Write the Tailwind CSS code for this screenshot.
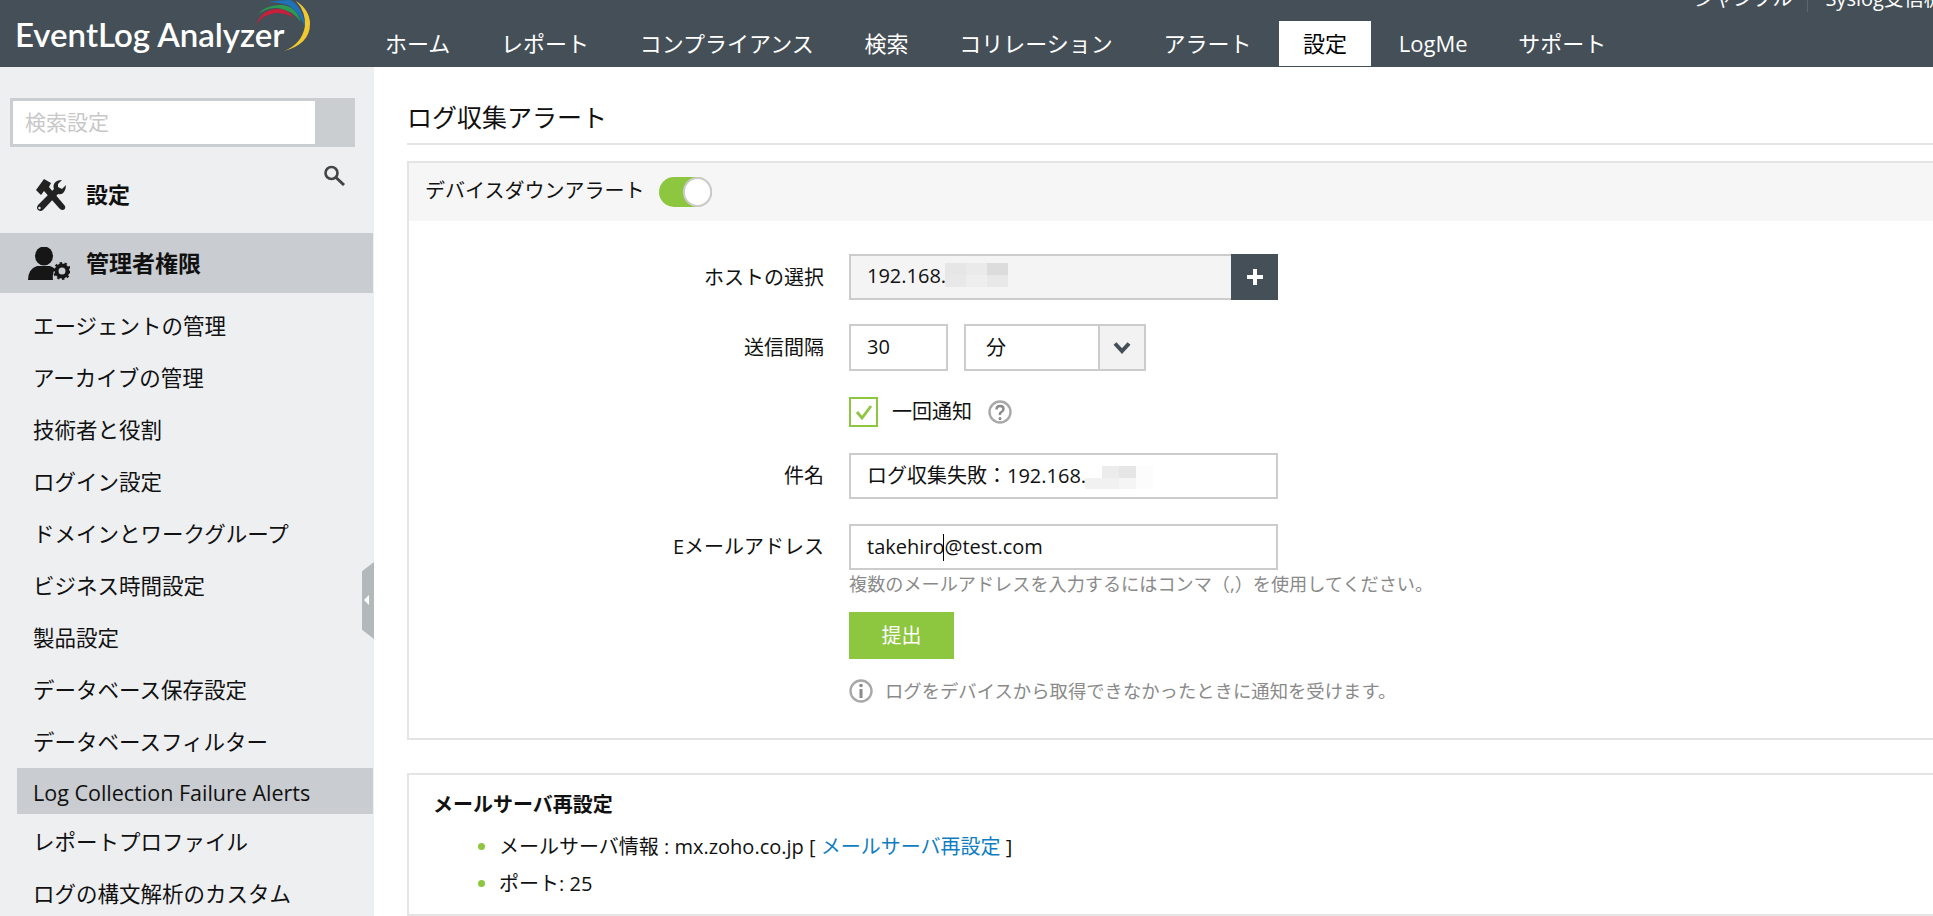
<!DOCTYPE html>
<html lang="ja">
<head>
    <meta charset="UTF-8">
    <title>EventLog Analyzer</title>
    <script src="https://cdn.jsdelivr.net/npm/@tailwindcss/browser@4"></script>
</head>
<body class="h-[916px] overflow-hidden bg-white text-[#111] font-['Open_Sans','Noto_Sans_CJK_JP',sans-serif]">
    <!-- header -->
    <header class="relative h-[67px] bg-[#444f57] overflow-hidden">
        <div class="absolute left-[15px] top-[16px] font-['Lato',sans-serif] font-semibold text-[33px] leading-[36px] text-white whitespace-nowrap">EventLog Analyzer</div>
        <svg class="absolute left-0 top-0" width="320" height="60" viewBox="0 0 320 60">
            <path fill="#c8203a" d="M256 25Q262 9 278 9Q288 9 294 18Q286 13 276 13Q263 14 256 25Z"/>
            <path fill="#2c9a52" d="M256 16Q266 4 282 5Q296 6 301 22Q292 10 278 8Q266 7 256 16Z"/>
            <path fill="#1f71b8" d="M268 2Q280 0 290 0Q303 6 306 30Q300 12 288 5Q278 2 268 2Z"/>
            <path fill="#f2c92d" d="M296 1Q310 10 310 24Q310 44 284 51Q302 44 305 26Q306 12 296 1Z"/>
        </svg>
        <nav class="absolute left-[362px] top-[21px] flex gap-[4.700px] text-[22px] leading-[44px] h-[45px] text-white">
            <a class="px-[23px]">ホーム</a>
            <a class="px-[23px]">レポート</a>
            <a class="px-[23px]">コンプライアンス</a>
            <a class="px-[23px]">検索</a>
            <a class="px-[23px]">コリレーション</a>
            <a class="px-[23px]">アラート</a>
            <a class="px-[24px] bg-white text-black">設定</a>
            <a class="px-[23px]">LogMe</a>
            <a class="px-[23px]">サポート</a>
        </nav>
        <div class="absolute left-[1694px] top-[-14px] flex items-center text-[20px] leading-[24px] text-white whitespace-nowrap">
            <span>ジャンプル</span>
            <span class="ml-[15px] mr-[17px] h-[26px] w-px bg-[#5c666e]"></span>
            <span>Syslog受信機</span>
        </div>
    </header>

    <div class="flex h-[849px]">
        <!-- sidebar -->
        <aside class="relative w-[374px] shrink-0 bg-[#eeeff1] overflow-hidden pt-[31px]">
            <div class="ml-[10px] w-[345px] h-[49px] bg-[#cbced1] pl-[3px] py-[3px]">
                <div class="w-[302px] h-[43px] bg-white pl-[12px] text-[21px] leading-[43px] text-[#c8c8c8]">検索設定</div>
            </div>
            <svg class="absolute left-[323px] top-[98px]" width="22" height="21" viewBox="0 0 22 21" fill="none" stroke="#444" stroke-width="2.6">
                <circle cx="8.5" cy="8" r="6"/>
                <path d="M13 12.5 21 20" stroke-width="3"/>
            </svg>
            <div class="flex items-center h-[86px] pl-[36px] pt-[9px]">
                <svg width="30" height="32" viewBox="0 0 30 32" fill="#222">
                    <path d="M8 0 15 4 13 8 29 27Q30 30 27 31 25 31.500 23 29L8 12 5 16 0 11Z"/>
                    <path d="M26 1Q20 1 18 5 17 8 18 10L2 26Q0 29 2 31 5 33 7 31L22 15Q26 16 28 13 30 10 30 6L26 10 22 8 22 5Z"/>
                    <circle cx="3.500" cy="29" r="1.200" fill="#eeeff1"/>
                </svg>
                <span class="ml-[20px] text-[22px] font-bold">設定</span>
            </div>
            <div class="flex items-center h-[60px] w-[373px] pl-[28px] bg-[#c9ccd0]">
                <svg width="42" height="33" viewBox="0 0 42 33" fill="#161616">
                    <ellipse cx="16" cy="9" rx="9" ry="9.500"/>
                    <path d="M0 33q0-11 9-14h13q3 1 5 3-3 5-2 11z"/>
                    <circle cx="34" cy="24" r="5.500" fill="none" stroke="#161616" stroke-width="4"/>
                    <circle cx="34" cy="24" r="8" fill="none" stroke="#161616" stroke-width="2" stroke-dasharray="2.500 2.500"/>
                </svg>
                <span class="ml-[16px] text-[23px] font-bold">管理者権限</span>
            </div>
            <ul class="mt-[8px] text-[21.500px] leading-[50px]">
                <li class="pl-[33px] h-[52px]">エージェントの管理</li>
                <li class="pl-[33px] h-[52px]">アーカイブの管理</li>
                <li class="pl-[33px] h-[52px]">技術者と役割</li>
                <li class="pl-[33px] h-[52px]">ログイン設定</li>
                <li class="pl-[33px] h-[52px]">ドメインとワークグループ</li>
                <li class="pl-[33px] h-[52px]">ビジネス時間設定</li>
                <li class="pl-[33px] h-[52px]">製品設定</li>
                <li class="pl-[33px] h-[52px]">データベース保存設定</li>
                <li class="pl-[33px] h-[52px]">データベースフィルター</li>
                <li class="ml-[17px] mt-[-1px] pl-[16px] w-[356px] h-[46px] leading-[50px] bg-[#c9ccd0]">Log Collection Failure Alerts</li>
                <li class="pl-[33px] h-[52px] mt-[3px]">レポートプロファイル</li>
                <li class="pl-[33px] h-[52px]">ログの構文解析のカスタム</li>
            </ul>
            <!-- collapse handle -->
            <div class="absolute right-0 top-[495px] w-[12px] h-[77px] bg-[#b3b9bb] [clip-path:polygon(100%_0,100%_100%,0_88%,0_12%)]">
                <div class="absolute left-[2px] top-[33px] w-0 h-0 border-y-[5px] border-y-transparent border-r-[5px] border-r-white"></div>
            </div>
        </aside>

        <!-- main -->
        <main class="flex-1 min-w-0 overflow-hidden pl-[33px]">
            <h1 class="h-[78px] pt-[33px] w-[1530px] border-b-2 border-[#e3e5e6] text-[25px] leading-[34px] font-normal">ログ収集アラート</h1>
            <section class="mt-[16px] w-[1540px] h-[579px] border-2 border-[#e4e4e4]">
                <div class="flex items-center h-[58px] bg-[#f6f6f6] pl-[16px]">
                    <span class="text-[20px] leading-[24px] mb-[2px]">デバイスダウンアラート</span>
                    <span class="ml-[15px] relative w-[53px] h-[30px] rounded-full bg-[#8dc63f]">
                        <span class="absolute right-0 top-0 w-[29px] h-[30px] rounded-full bg-white border-2 border-[#ccc]"></span>
                    </span>
                </div>
                <div class="grid grid-cols-[415px_1fr] gap-x-[25px] pt-[33px] text-[20px]">
                    <label class="text-right leading-[48px] h-[46px]">ホストの選択</label>
                    <div class="flex h-[46px] w-[429px]">
                        <div class="relative flex-1 bg-[#f4f4f4] border-2 border-[#ccc] border-r-0 pl-[16px] leading-[40px]">192.168.
                            <span class="absolute left-[94px] top-[7px] grid grid-cols-3 w-[63px] h-[24px]">
                                <i class="bg-[#e6e6e6]"></i><i class="bg-[#eaeaea]"></i><i class="bg-[#dcdcdc]"></i>
                                <i class="bg-[#e8e8e8]"></i><i class="bg-[#eeeeee]"></i><i class="bg-[#e8e8e8]"></i>
                            </span>
                        </div>
                        <div class="w-[47px] bg-[#444f57] flex items-center justify-center">
                            <svg width="18" height="18" viewBox="0 0 18 18" fill="#fff"><path d="M7 1h4v6h6v4h-6v6H7v-6H1V7h6z"/></svg>
                        </div>
                    </div>
                    <label class="mt-[24px] text-right leading-[47px] h-[47px]">送信間隔</label>
                    <div class="mt-[24px] flex h-[47px]">
                        <div class="w-[99px] border-2 border-[#ccc] pl-[16px] leading-[41px]">30</div>
                        <div class="ml-[16px] w-[182px] flex border-2 border-[#ccc]">
                            <div class="flex-1 pl-[20px] leading-[43px]">分</div>
                            <div class="w-[46px] bg-[#f2f2f2] border-l-2 border-[#ccc] flex items-center justify-center">
                                <svg width="18" height="13" viewBox="0 0 18 13" fill="none" stroke="#444f57" stroke-width="4"><path d="M2 2.500 9 10l7-7.500"/></svg>
                            </div>
                        </div>
                    </div>
                    <div></div>
                    <div class="mt-[26px] flex items-center h-[30px]">
                        <span class="flex items-center justify-center w-[29px] h-[30px] border-2 border-[#8dc63f]">
                            <svg width="18" height="16" viewBox="0 0 18 16" fill="none" stroke="#8dc63f" stroke-width="2.800"><path d="M2 8l5 6L16 2"/></svg>
                        </span>
                        <span class="ml-[14px]">一回通知</span>
                        <svg class="ml-[16px]" width="24" height="24" viewBox="0 0 24 24" fill="none">
                            <circle cx="12" cy="12" r="10.500" stroke="#a8a8a8" stroke-width="2.400"/>
                            <path d="M8.500 9.500q0-3.500 3.500-3.500t3.500 3q0 2-2 3t-1.500 3" stroke="#8a8a8a" stroke-width="2.400"/>
                            <circle cx="12" cy="18.500" r="1.500" fill="#8a8a8a"/>
                        </svg>
                    </div>
                    <label class="mt-[26px] text-right leading-[46px] h-[46px]">件名</label>
                    <div class="mt-[26px] relative w-[429px] h-[46px] border-2 border-[#ccc] pl-[16px] leading-[42px]">ログ収集失敗：192.168.
                        <span class="absolute left-[234px] top-[11px] grid grid-cols-4 w-[68px] h-[23px]">
                            <i class="bg-[#ffffff]"></i><i class="bg-[#ececec]"></i><i class="bg-[#e6e6e6]"></i><i class="bg-[#fcfcfc]"></i>
                            <i class="bg-[#f1f1f1]"></i><i class="bg-[#f1f1f1]"></i><i class="bg-[#f5f5f5]"></i><i class="bg-[#fcfcfc]"></i>
                        </span>
                    </div>
                    <label class="mt-[25px] text-right leading-[46px] h-[46px]">Eメールアドレス</label>
                    <div class="mt-[25px] relative w-[429px] h-[46px] border-2 border-[#ccc] pl-[16px] leading-[42px]">takehiro@test.com
                        <span class="absolute left-[92px] top-[8px] w-px h-[27px] bg-black"></span>
                    </div>
                    <div></div>
                    <div class="mt-[1px] text-[18.150px] leading-[26px] text-[#8a8a8a] whitespace-nowrap">複数のメールアドレスを入力するにはコンマ（,）を使用してください。</div>
                    <div></div>
                    <div class="mt-[15px]">
                        <button class="block w-[105px] h-[47px] bg-[#8dc63f] text-white text-[20px]">提出</button>
                    </div>
                    <div></div>
                    <div class="mt-[20px] flex items-center h-[24px] text-[18.350px] text-[#8a8a8a]">
                        <svg width="24" height="24" viewBox="0 0 24 24" fill="none">
                            <circle cx="12" cy="12" r="10.500" stroke="#a8a8a8" stroke-width="2.400"/>
                            <rect x="10.500" y="10" width="3" height="9" fill="#8a8a8a"/>
                            <circle cx="12" cy="6.500" r="1.800" fill="#8a8a8a"/>
                        </svg>
                        <span class="ml-[12px]">ログをデバイスから取得できなかったときに通知を受けます。</span>
                    </div>
                </div>
            </section>
            <section class="mt-[33px] w-[1540px] h-[143px] border-2 border-[#e4e4e4] pl-[24px] pt-[16px] text-[20px]">
                <h2 class="font-bold leading-[28px]">メールサーバ再設定</h2>
                <ul class="mt-[9px] ml-[45px]">
                    <li class="flex items-center h-[37px]"><span class="w-[7px] h-[7px] rounded-full bg-[#8dc63f]"></span><span class="ml-[14px]">メールサーバ情報 : mx.zoho.co.jp [ <a class="text-[#0f7ec0]">メールサーバ再設定</a> ]</span></li>
                    <li class="flex items-center h-[37px]"><span class="w-[7px] h-[7px] rounded-full bg-[#8dc63f]"></span><span class="ml-[14px]">ポート: 25</span></li>
                </ul>
            </section>
        </main>
    </div>
</body>
</html>
